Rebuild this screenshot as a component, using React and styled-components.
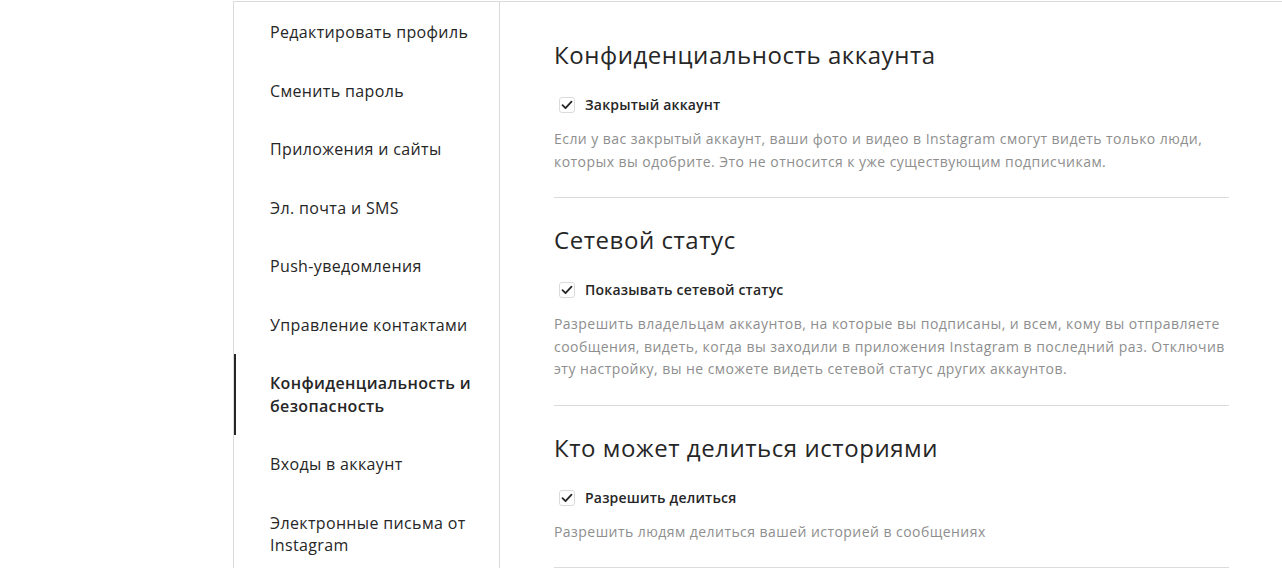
import styled, { createGlobalStyle } from "styled-components"

const GlobalStyle = createGlobalStyle`
    body {
        margin: 0;
        background: #ffffff;
        font-family: 'Open Sans', 'Noto Sans', sans-serif;
        color: #262626;
        overflow: hidden;
    }
`

const menu = [
    "Редактировать профиль",
    "Сменить пароль",
    "Приложения и сайты",
    "Эл. почта и SMS",
    "Push-уведомления",
    "Управление контактами",
    "Конфиденциальность и безопасность",
    "Входы в аккаунт",
    "Электронные письма от Instagram",
]

const sections = [
    {
        title: "Конфиденциальность аккаунта",
        option: "Закрытый аккаунт",
        text: "Если у вас закрытый аккаунт, ваши фото и видео в Instagram смогут видеть только люди, которых вы одобрите. Это не относится к уже существующим подписчикам.",
    },
    {
        title: "Сетевой статус",
        option: "Показывать сетевой статус",
        text: "Разрешить владельцам аккаунтов, на которые вы подписаны, и всем, кому вы отправляете сообщения, видеть, когда вы заходили в приложения Instagram в последний раз. Отключив эту настройку, вы не сможете видеть сетевой статус других аккаунтов.",
    },
    {
        title: "Кто может делиться историями",
        option: "Разрешить делиться",
        text: "Разрешить людям делиться вашей историей в сообщениях",
    },
]

function Check() {
    return (
        <Box>
            <svg width="12" height="10" viewBox="0 0 12 10">
                <path d="M1.5 5.2 L4.5 8.2 L10.5 1.6" fill="none" stroke="#262626" strokeWidth="1.8" strokeLinecap="round" strokeLinejoin="round" />
            </svg>
        </Box>
    )
}

export default function App() {
    return (
        <>
            <GlobalStyle />
            <Frame>
                <Sidebar>
                    {menu.map((item, i) => (
                        <MenuItem key={item} active={i === 6}>{item}</MenuItem>
                    ))}
                </Sidebar>
                <Main>
                    {sections.map((s) => (
                        <Section key={s.title}>
                            <Title>{s.title}</Title>
                            <Option>
                                <Check />
                                <OptionLabel>{s.option}</OptionLabel>
                            </Option>
                            <Description>{s.text}</Description>
                        </Section>
                    ))}
                </Main>
            </Frame>
        </>
    )
}

const Frame = styled.div`
    margin: 1px 0 0 233px;
    width: 1050px;
    height: 620px;
    border: 1px solid #dbdbdb;
    display: flex;
    background: #fff;
`

const Sidebar = styled.ul`
    list-style: none;
    margin: 0;
    padding: 1px 0 0;
    width: 265px;
    flex-shrink: 0;
    border-right: 1px solid #dbdbdb;
`

const MenuItem = styled.li`
    padding: 18px 16px 18px 34px;
    font-size: 16px;
    line-height: 22.5px;
    letter-spacing: 0.35px;
    border-left: 2px solid ${(p) => (p.active ? "#262626" : "transparent")};
    font-weight: ${(p) => (p.active ? 600 : 400)};
    color: #262626;
`

const Main = styled.div`
    flex: 1;
    padding: 10px 55px 0 54px;
`

const Section = styled.section`
    padding: 27px 0 24px;
    border-bottom: 1px solid #dbdbdb;

    &:first-child {
        padding-top: 28px;
    }
`

const Title = styled.h2`
    margin: 0 0 26px;
    font-size: 24px;
    line-height: 30px;
    font-weight: 400;
    letter-spacing: 0.55px;
    color: #262626;
`

const Option = styled.label`
    display: flex;
    align-items: center;
    gap: 10px;
    padding-left: 5px;
    height: 18px;
`

const Box = styled.span`
    width: 16px;
    height: 16px;
    box-sizing: border-box;
    border: 1px solid #dbdbdb;
    border-radius: 3px;
    display: flex;
    align-items: center;
    justify-content: center;
`

const OptionLabel = styled.span`
    font-size: 14px;
    font-weight: 600;
    line-height: 18px;
    letter-spacing: 0.2px;
    color: #262626;
`

const Description = styled.p`
    margin: 14px 0 0;
    font-size: 14px;
    line-height: 22.5px;
    letter-spacing: 0.45px;
    color: #8e8e8e;
`
